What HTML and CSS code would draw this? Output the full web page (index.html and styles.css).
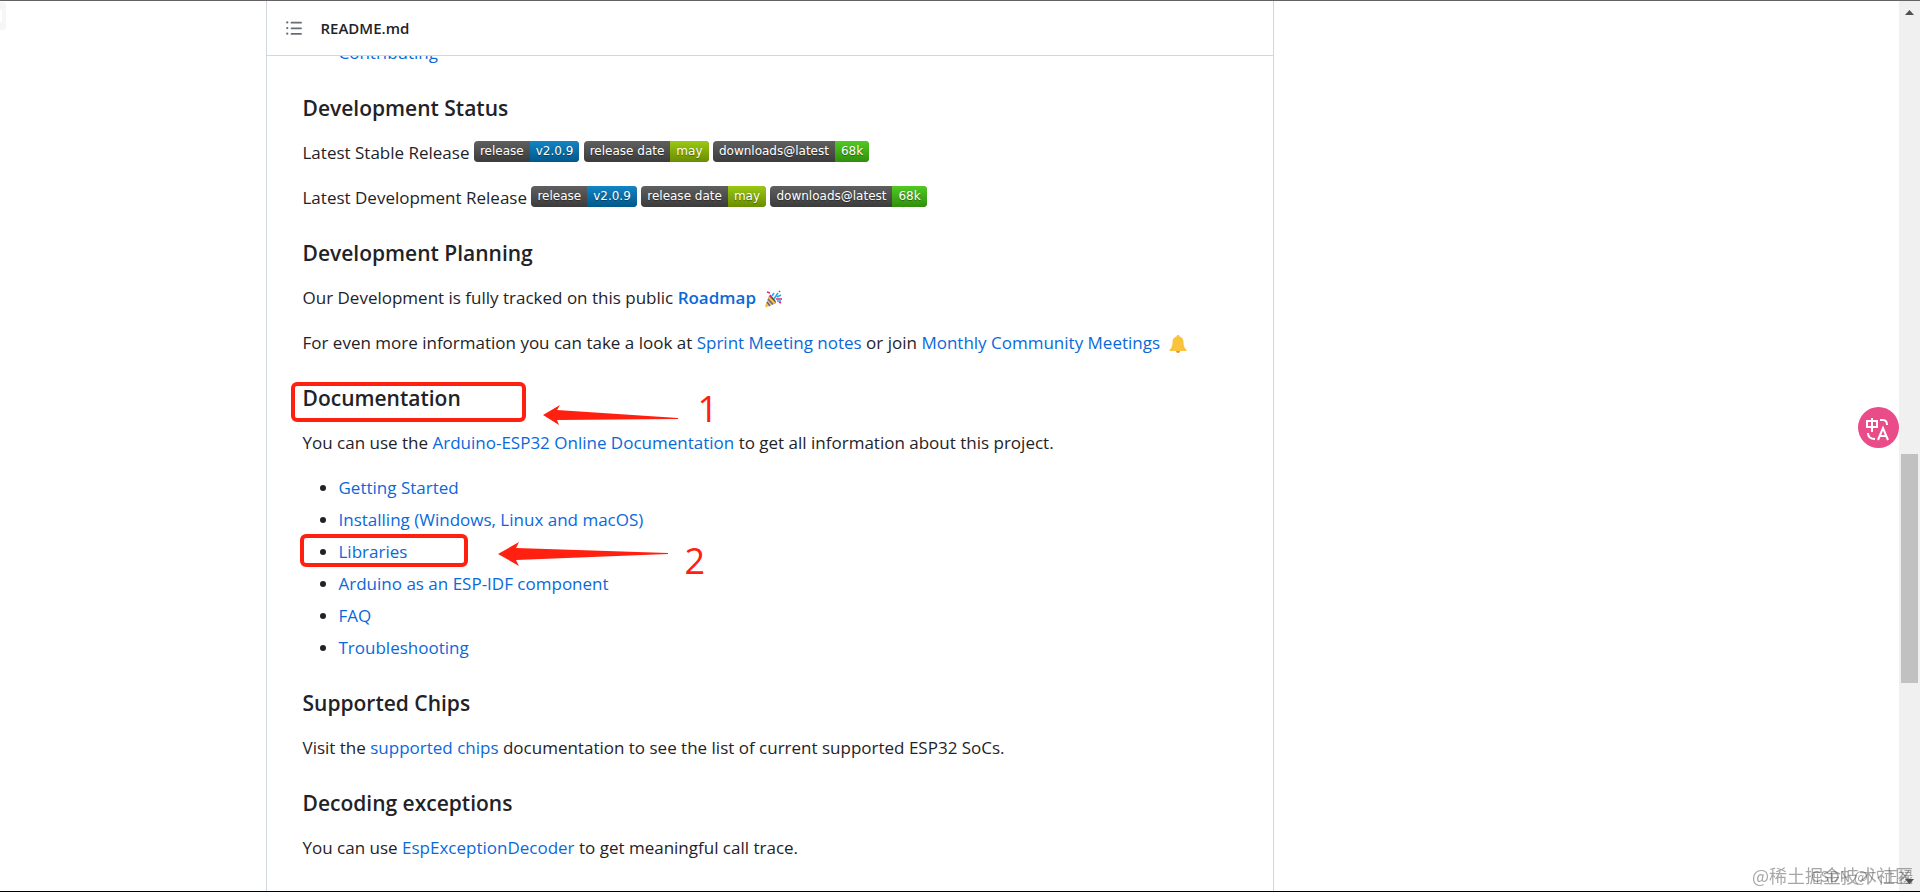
FILE: index.html
```html
<!DOCTYPE html>
<html lang="en">
<head>
<meta charset="utf-8">
<title>README.md</title>
<link rel="stylesheet" href="styles.css">
</head>
<body>
<div class="window">
  <div class="viewport">
    <div class="edge-popup"></div>
    <div class="container">
      <main class="readme">
        <header class="readme-header">
          <button class="toc-btn" type="button" aria-label="Table of contents">
            <svg viewBox="0 0 16 16" width="18" height="18"><path d="M5.75 2.5h8.5a.75.75 0 0 1 0 1.5h-8.5a.75.75 0 0 1 0-1.5Zm0 5h8.5a.75.75 0 0 1 0 1.5h-8.5a.75.75 0 0 1 0-1.5Zm0 5h8.5a.75.75 0 0 1 0 1.5h-8.5a.75.75 0 0 1 0-1.5ZM2 14a1 1 0 1 1 0-2 1 1 0 0 1 0 2Zm1-6a1 1 0 1 1-2 0 1 1 0 0 1 2 0ZM2 4a1 1 0 1 1 0-2 1 1 0 0 1 0 2Z"/></svg>
          </button>
          <h2>README.md</h2>
        </header>

        <article class="markdown">
          <ul>
            <li><a href="#contributing">Contributing</a></li>
          </ul>

          <h3>Development Status</h3>
          <p>Latest Stable Release
            <a class="badge" href="#stable"><span>release</span><span class="blue">v2.0.9</span></a>
            <a class="badge" href="#stable"><span>release date</span><span class="olive">may</span></a>
            <a class="badge" href="#stable"><span>downloads@latest</span><span class="green">68k</span></a>
          </p>
          <p>Latest Development Release
            <a class="badge" href="#dev"><span>release</span><span class="blue">v2.0.9</span></a>
            <a class="badge" href="#dev"><span>release date</span><span class="olive">may</span></a>
            <a class="badge" href="#dev"><span>downloads@latest</span><span class="green">68k</span></a>
          </p>

          <h3>Development Planning</h3>
          <p>Our Development is fully tracked on this public <a href="#roadmap"><strong>Roadmap</strong></a>
            <svg class="emoji" viewBox="0 0 18 18"><path fill="#5c4033" d="M5 6c2-1 7 4 7 7l-3 1-5-4z"/><path fill="#f5c344" d="M5 6l7 7-10 4.5L1 16z"/><path stroke="#6460b8" stroke-width="1.5" d="M4 9l5 5.500M3 12l3 4"/><path fill="none" stroke="#e91e8c" stroke-width="1.600" d="M3 2l3 1M6 5l2 3M12 9h6M15 12l2 1M15 2l1-1"/><path fill="none" stroke="#1eaee0" stroke-width="1.600" d="M8 6l2-3M10 9l4-6M13 7l4-2M13 11l4 0"/></svg>
          </p>
          <p>For even more information you can take a look at <a href="#notes">Sprint Meeting notes</a> or join <a href="#meetings">Monthly Community Meetings</a>
            <svg class="emoji" viewBox="0 0 18 18"><circle cx="9" cy="16" r="2" fill="#f28b30"/><path fill="#fac33c" d="M9 0c1 0 1.500.6 1.500 1.500C13 2 14.500 4 14.500 7c0 4 1 6 3 8v1H.5v-1c2-2 3-4 3-8 0-3 1.500-5 4-5.500C7.500.6 8 0 9 0z"/></svg>
          </p>

          <h3 class="marked">Documentation
            <span class="mark mark-title">
              <svg class="arrow" viewBox="0 0 135 20" width="135" height="20"><path d="M0 10L17 0l-3 5 121 8v1L14 15l2 5z"/></svg>
              <span class="num">1</span>
            </span>
          </h3>
          <p>You can use the <a href="#docs">Arduino-ESP32 Online Documentation</a> to get all information about this project.</p>
          <ul>
            <li><a href="#start">Getting Started</a></li>
            <li><a href="#install">Installing (Windows, Linux and macOS)</a></li>
            <li class="marked"><a href="#libraries">Libraries</a>
              <span class="mark mark-item">
                <svg class="arrow" viewBox="0 0 170 24" width="170" height="24"><path d="M0 12L21 0l-3 6 152 5v1L18 18l3 6z"/></svg>
                <span class="num">2</span>
              </span>
            </li>
            <li><a href="#idf">Arduino as an ESP-IDF component</a></li>
            <li><a href="#faq">FAQ</a></li>
            <li><a href="#trouble">Troubleshooting</a></li>
          </ul>

          <h3>Supported Chips</h3>
          <p>Visit the <a href="#chips">supported chips</a> documentation to see the list of current supported ESP32 SoCs.</p>

          <h3>Decoding exceptions</h3>
          <p>You can use <a href="#decoder">EspExceptionDecoder</a> to get meaningful call trace.</p>
        </article>
      </main>
    </div>
    <button class="translate" type="button" aria-label="Translate">
      <svg viewBox="0 0 40 40" width="40" height="40"><path d="M9 13h10v6H9zM14 10v14M22 12h3q4 0 4 5M10 25q0 6 7 6M20 32l5-12 5 12M22 28h6"/></svg>
    </button>
  </div>

  <div class="scrollbar">
    <svg viewBox="0 0 9 5" width="9" height="5"><path d="M0 5L4.500 0 9 5z"/></svg>
    <div class="track"><div class="thumb"></div></div>
    <svg viewBox="0 0 9 5" width="9" height="5"><path d="M0 0h9L4.500 5z"/></svg>
  </div>
</div>
<div class="watermark">@稀土掘金技术社区</div>
<div class="watermark csdn">CSDN @八正禄</div>
</body>
</html>
```

FILE: styles.css
```css
* {
	box-sizing: border-box;
}
body {
	margin: 0;
	background: #fff;
	color: #1f2328;
	font: 17px/27px "Open Sans", "Noto Sans", sans-serif;
}
a {
	color: #0969da;
	text-decoration: none;
}
a:hover {
	text-decoration: underline;
}
strong {
	font-weight: 600;
}
button {
	padding: 0;
	border: 0;
	background: none;
	cursor: pointer;
}
.window {
	display: flex;
	height: 100vh;
	border-top: 1px solid #656165;
	border-bottom: 1px solid #000;
}
.viewport {
	position: relative;
	flex: 1;
	min-width: 0;
	overflow: hidden;
}
.edge-popup {
	position: absolute;
	top: 1px;
	left: 0;
	width: 6px;
	height: 28px;
	border: solid #f6f6f6;
	border-width: 8px 4px 8px 0;
	border-radius: 0 4px 4px 0;
}
.container {
	display: grid;
	grid-template-columns: minmax(0, 1fr) 333px;
	gap: 27px;
	max-width: 1440px;
	min-height: 100%;
	margin: 0 auto;
	padding: 0 36px;
}

/* readme */
.readme {
	border: solid #d0d7de;
	border-width: 0 1px;
}
.readme-header {
	position: sticky;
	top: 0;
	z-index: 1;
	display: flex;
	align-items: center;
	gap: 18px;
	height: 55px;
	padding: 0 18px;
	background: #fff;
	border-bottom: 1px solid #d0d7de;
}
.readme-header h2 {
	margin: 0;
	font-size: 15px;
	font-weight: 600;
}
.toc-btn {
	display: flex;
	fill: #656d76;
}
.markdown {
	margin-top: -17px;
	padding: 0 36px;
}
.markdown p,
.markdown ul {
	margin: 0 0 18px;
}
.markdown ul {
	padding-left: 36px;
}
.markdown li + li {
	margin-top: 5px;
}
.markdown h3 {
	margin: 28px 0 17px;
	font-size: 21px;
	font-weight: 600;
	line-height: 28px;
}
.emoji {
	width: 18px;
	height: 18px;
	margin-left: 4px;
	vertical-align: -4px;
}

/* badges */
.badge {
	display: inline-flex;
	height: 21px;
	border-radius: 4px;
	overflow: hidden;
	background: #555;
	color: #fff;
	font: 12px/20px "DejaVu Sans", Verdana, sans-serif;
	text-shadow: 0 1px 1px rgba(1, 1, 1, .4);
	vertical-align: 4px;
}
.badge span {
	padding: 0 6px;
	background-image: linear-gradient(rgba(187, 187, 187, .1), rgba(0, 0, 0, .3));
}
.badge .blue {
	background-color: #007ec6;
}
.badge .olive {
	background-color: #97ca00;
}
.badge .green {
	background-color: #4c1;
}

/* red pen marks */
.marked {
	position: relative;
}
.mark {
	position: absolute;
	border: 4px solid #ff2010;
	border-radius: 6px;
	color: #ff2010;
	font: 36px/36px "Open Sans", sans-serif;
}
.mark-title {
	top: -2px;
	left: -12px;
	width: 235px;
	height: 40px;
}
.mark-item {
	top: -4px;
	left: -39px;
	width: 168px;
	height: 33px;
}
.arrow,
.num {
	position: absolute;
}
.arrow {
	fill: #ff2010;
}
.mark-title .arrow {
	top: 19px;
	left: 248px;
}
.mark-title .num {
	top: 5px;
	left: 403px;
}
.mark-item .arrow {
	top: 4px;
	left: 194px;
}
.mark-item .num {
	top: 5px;
	left: 381px;
}

.translate {
	position: absolute;
	top: 406px;
	right: 0;
	width: 41px;
	height: 41px;
	border-radius: 50%;
	background: #ea4c89;
}
.translate svg {
	display: block;
	fill: none;
	stroke: #fff;
	stroke-width: 2;
}

/* scrollbar */
.scrollbar {
	display: flex;
	flex-direction: column;
	align-items: center;
	flex: 0 0 21px;
	padding: 9px 0 7px;
	background: #f0f0f0;
	fill: #505050;
}
.track {
	flex: 1;
	width: 17px;
	margin: 7px 0;
}
.thumb {
	height: 27%;
	margin-top: 2540%;
	background: #c1c1c1;
}

.watermark {
	position: fixed;
	right: 7px;
	bottom: 3px;
	color: rgba(80, 80, 80, .5);
	font: 18px/27px "Noto Sans CJK SC", sans-serif;
}
.csdn {
	font-size: 15px;
}
```
